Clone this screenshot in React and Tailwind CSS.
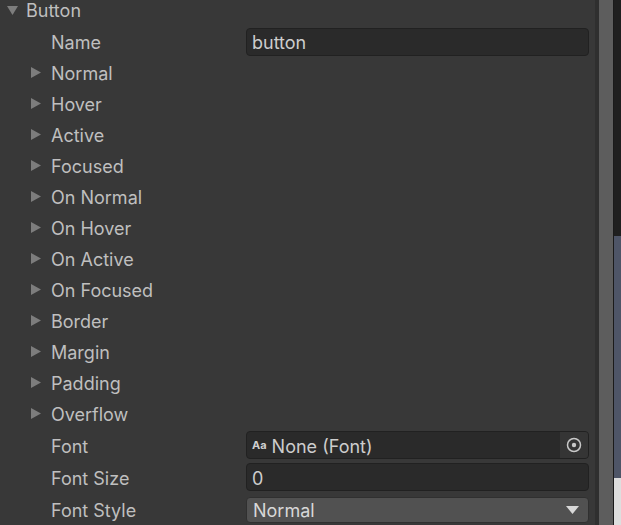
import React from "react";

const Right = () => (
  <svg width="10" height="11" viewBox="0 0 10 11" className="shrink-0">
    <path d="M0 0 L10 5.5 L0 11 Z" fill="#7d7d7d" />
  </svg>
);

const Down = () => (
  <svg width="11" height="9" viewBox="0 0 11 9" className="shrink-0">
    <path d="M0 0 L11 0 L5.5 9 Z" fill="#7d7d7d" />
  </svg>
);

const foldouts = [
  "Normal",
  "Hover",
  "Active",
  "Focused",
  "On Normal",
  "On Hover",
  "On Active",
  "On Focused",
  "Border",
  "Margin",
  "Padding",
  "Overflow",
];

export default function App() {
  return (
    <div
      className="flex w-[621px] h-[525px] overflow-hidden bg-[#383838] text-[#bfbfbf]"
      style={{ fontFamily: "Inter, 'Noto Sans', sans-serif" }}
    >
      <div className="w-[595px] shrink-0 flex flex-col text-[18px] leading-none">
        {/* header */}
        <div className="h-[21px] flex items-center pl-[7px] gap-[8px]">
          <Down />
          <span className="pt-[1px]">Button</span>
        </div>
        {/* Name row */}
        <div className="h-[31px] mt-[5px] flex items-center">
          <span className="w-[246px] pl-[51px] pt-[2px] shrink-0">Name</span>
          <div className="w-[343px] h-[28px] rounded-[4px] bg-[#2a2a2a] border border-[#212121] flex items-center pl-[5px] pt-[2px] text-[#cdcdcd]">
            button
          </div>
        </div>
        {foldouts.map((f) => (
          <div key={f} className="h-[31px] flex items-center pl-[31px] gap-[10px]">
            <Right />
            <span className="pt-[2px]">{f}</span>
          </div>
        ))}
        {/* Font */}
        <div className="h-[32px] flex items-center">
          <span className="w-[246px] pl-[51px] pt-[4px] shrink-0">Font</span>
          <div className="w-[343px] h-[28px] rounded-[4px] bg-[#2a2a2a] border border-[#212121] flex items-center overflow-hidden">
            <span className="pl-[5px] pr-[5px] text-[11px] font-bold text-[#cfcfcf]">Aa</span>
            <span className="flex-1 pt-[3px] text-[#cdcdcd]">None (Font)</span>
            <div className="w-[28px] h-full bg-[#353535] flex items-center justify-center">
              <svg width="16" height="16" viewBox="0 0 16 16">
                <circle cx="8" cy="8" r="6.5" fill="none" stroke="#c8c8c8" strokeWidth="1.5" />
                <circle cx="8" cy="8" r="2.2" fill="#c8c8c8" />
              </svg>
            </div>
          </div>
        </div>
        {/* Font Size */}
        <div className="h-[32px] flex items-center">
          <span className="w-[246px] pl-[51px] pt-[4px] shrink-0">Font Size</span>
          <div className="w-[343px] h-[28px] rounded-[4px] bg-[#2a2a2a] border border-[#212121] flex items-center pl-[5px] pt-[3px] text-[#cdcdcd]">
            0
          </div>
        </div>
        {/* Font Style */}
        <div className="h-[32px] flex items-center">
          <span className="w-[246px] pl-[51px] pt-[4px] shrink-0">Font Style</span>
          <div className="w-[343px] h-[26px] mt-[2px] rounded-[4px] bg-[#515151] border border-[#303030] flex items-center pl-[6px] pr-[9px] text-[#d8d8d8]">
            <span className="flex-1 pt-[2px]">Normal</span>
            <svg width="13" height="8" viewBox="0 0 13 8">
              <path d="M0 0 L13 0 L6.5 8 Z" fill="#d8d8d8" />
            </svg>
          </div>
        </div>
      </div>
      <div className="w-[4px] shrink-0 bg-[#2f2f2f]" />
      <div className="w-[14px] shrink-0 bg-[#5d5d5d]" />
      <div className="w-[1px] shrink-0 bg-[#1a1a1a]" />
      <div className="flex-1 flex flex-col">
        <div className="h-[236px] bg-[#1f1f1f]" />
        <div className="h-[242px] bg-[#4e5567]" />
        <div className="flex-1 bg-[#dedede]" />
      </div>
    </div>
  );
}
